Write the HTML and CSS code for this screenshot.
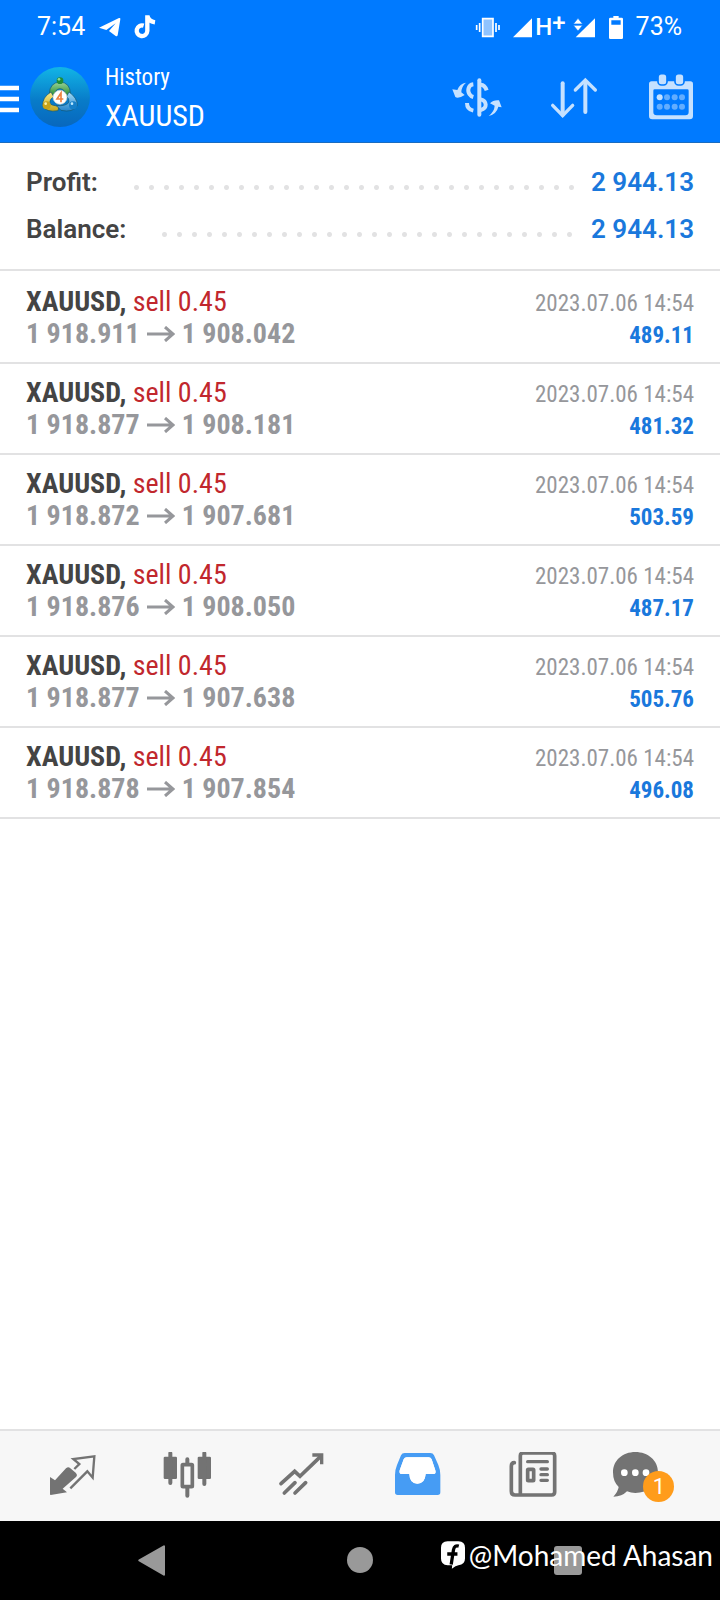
FILE: index.html
```html
<!DOCTYPE html>
<html lang="en">
<head>
<meta charset="utf-8">
<meta name="viewport" content="width=device-width, initial-scale=1">
<title>History XAUUSD</title>
<link rel="stylesheet" href="styles.css">
</head>
<body>
<div class="screen">
  <header class="header">
    <div class="status">
      <span class="clock">7:54</span>
      <svg class="telegram" viewBox="294 45 69 72"><path fill="#fff" d="M297 83 357 54Q362 53 361 58L353 106Q351 111 346 107L327 93 347 70 319 90Z"/></svg>
      <svg class="tiktok" viewBox="399 45 69 72"><path fill="none" stroke="#fff" stroke-width="13" d="M431 77A16 16 0 1 0 442 93V46M442 47Q445 64 465 67"/></svg>
      <span class="spring"></span>
      <svg class="vibrate" viewBox="141 45 78 69"><path fill="#8fc3ff" stroke="#fff" stroke-width="5" d="M164 53H195V106H164Z"/><path fill="none" stroke="#fff" stroke-width="5" d="M155 66V93M146 72V87M204 66V93M213 72V87"/></svg>
      <svg class="signal" viewBox="255 45 57 69"><path fill="#fff" d="M255 109 312 52V109Z"/></svg>
      <span class="network">H<span class="plus">+</span></span>
      <svg class="signal-two" viewBox="429 45 69 69"><path fill="#fff" d="M437 109 495 52V109Z"/><path fill="#fff" stroke="#007aff" stroke-width="2" d="M430 69 444 52 458 69ZM430 73H458L444 90Z"/></svg>
      <svg class="battery" viewBox="533 42 48 75"><path fill="#fff" fill-rule="evenodd" d="M549 45H565V50H574Q578 50 578 54V110Q578 114 574 114H540Q536 114 536 110V54Q536 50 540 50H549ZM543 58V71H571V58Z"/></svg>
      <span class="charge">73%</span>
    </div>
    <div class="appbar">
      <button class="menu" aria-label="Menu"><svg viewBox="0 256 57 84"><path stroke="#fff" stroke-width="14" d="M0 265H57M0 298H57M0 331H57"/></svg></button>
      <svg class="logo" viewBox="90 203 180 180">
        <defs>
          <linearGradient id="sky" x1="0" y1="0" x2="0" y2="1"><stop offset="0" stop-color="#12b5e6"/><stop offset=".55" stop-color="#087cc9"/><stop offset="1" stop-color="#0867bd"/></linearGradient>
          <linearGradient id="green" x1="0" y1="0" x2="0" y2="1"><stop offset="0" stop-color="#9bd49b"/><stop offset="1" stop-color="#248a2c"/></linearGradient>
          <linearGradient id="gold" x1="0" y1="0" x2="0" y2="1"><stop offset="0" stop-color="#f5e98a"/><stop offset="1" stop-color="#c6a61c"/></linearGradient>
          <linearGradient id="azure" x1="0" y1="0" x2="0" y2="1"><stop offset="0" stop-color="#a4dcf7"/><stop offset="1" stop-color="#2584cb"/></linearGradient>
        </defs>
        <circle cx="180" cy="293" r="90" fill="url(#sky)"/>
        <g stroke="#12556f" stroke-width="2">
          <path fill="url(#green)" d="M148 283Q149 250 180 248 211 250 211 283L198 290Q195 269 180 268 165 269 162 290Z"/>
          <path fill="url(#gold)" d="M153 278Q126 294 128 320 139 340 174 334L177 320Q152 319 149 311 149 299 161 292Z"/>
          <path fill="url(#azure)" d="M207 278Q232 295 232 319 218 341 183 333L169 319Q198 321 207 309 208 298 200 291Z"/>
        </g>
        <circle cx="180" cy="244" r="10" fill="#1f8d38"/>
        <circle cx="140" cy="318" r="12" fill="#c7a31a"/>
        <circle cx="219" cy="318" r="12" fill="#167fc9"/>
        <circle cx="137" cy="313" r="4" fill="#fff2a6"/><circle cx="216" cy="313" r="4" fill="#bde9ff"/><circle cx="177" cy="240" r="4" fill="#8edc92"/>
        <circle cx="180" cy="294" r="21" fill="#fff" stroke="#c9cfc5" stroke-width="2"/>
        <path fill="none" stroke="#ef8240" stroke-width="5" d="M183 309V281L171 299H190"/>
      </svg>
      <div class="titles"><span class="page">History</span><h1 class="symbol">XAUUSD</h1></div>
      <div class="actions">
        <button class="action" aria-label="Symbol filter"><svg viewBox="60 218 162 144"><g fill="none" stroke="#c5e1ff" stroke-linecap="round"><path stroke-width="12" d="M148 240V343"/><path stroke-width="12" stroke-linecap="butt" d="M130 252C113 254 112 274 119 282Q123 288 130 290M152 253Q165 254 170 270M111 308Q111 327 130 331M152 297C171 302 173 324 152 329"/></g><path fill="#c5e1ff" d="M108 247Q89 249 82 269L67 267 76 290Q84 297 104 284L94 276Q94 259 108 247ZM176 347Q193 333 194 316L180 309Q190 298 207 300L215 321 205 319Q200 341 176 347Z"/></svg></button>
        <button class="action" aria-label="Sort"><svg viewBox="351 218 162 144"><path fill="none" stroke="#c5e1ff" stroke-width="12" stroke-linecap="round" d="M398 249V343"/><path fill="none" stroke="#c5e1ff" stroke-width="10" stroke-linecap="round" d="M368 315 398 346 428 315M436 269 466 239 496 269"/><path stroke="#c5e1ff" stroke-width="12" stroke-linecap="round" d="M466 244V335"/></svg></button>
        <button class="action" aria-label="Date range"><svg viewBox="642 218 162 144"><path fill="#c5e1ff" fill-rule="evenodd" d="M665 243H781Q789 243 789 251V347Q789 357 779 357H667Q657 357 657 347V251Q657 243 665 243ZM674 267Q670 267 670 271V335Q670 345 680 345H766Q776 345 776 335V271Q776 267 772 267Z"/><g fill="#c5e1ff" stroke="#007aff" stroke-width="5"><rect x="684" y="220" width="27" height="34" rx="10"/><rect x="735" y="220" width="27" height="34" rx="10"/></g><circle cx="689" cy="291" r="9" fill="#c5e1ff"/><g fill="#62adff"><circle cx="711" cy="291" r="9"/><circle cx="734" cy="291" r="9"/><circle cx="756" cy="291" r="9"/><circle cx="689" cy="319" r="9"/><circle cx="711" cy="319" r="9"/><circle cx="734" cy="319" r="9"/><circle cx="756" cy="319" r="9"/></g></svg></button>
      </div>
    </div>
  </header>

  <main class="content">
    <section class="summary">
      <div class="total"><span>Profit:</span><i class="dots"></i><span class="amount">2 944.13</span></div>
      <div class="total"><span>Balance:</span><i class="dots"></i><span class="amount">2 944.13</span></div>
    </section>
    <ul class="deals">
      <li class="deal"><div><p class="name"><b>XAUUSD,</b> <span class="sell">sell 0.45</span></p><p class="prices">1 918.911 <svg class="arrow" viewBox="0 0 28 16"><path d="M0 8H26M18 1 26 8 18 15"/></svg> 1 908.042</p></div><div class="result"><time>2023.07.06 14:54</time><b class="gain">489.11</b></div></li>
      <li class="deal"><div><p class="name"><b>XAUUSD,</b> <span class="sell">sell 0.45</span></p><p class="prices">1 918.877 <svg class="arrow" viewBox="0 0 28 16"><path d="M0 8H26M18 1 26 8 18 15"/></svg> 1 908.181</p></div><div class="result"><time>2023.07.06 14:54</time><b class="gain">481.32</b></div></li>
      <li class="deal"><div><p class="name"><b>XAUUSD,</b> <span class="sell">sell 0.45</span></p><p class="prices">1 918.872 <svg class="arrow" viewBox="0 0 28 16"><path d="M0 8H26M18 1 26 8 18 15"/></svg> 1 907.681</p></div><div class="result"><time>2023.07.06 14:54</time><b class="gain">503.59</b></div></li>
      <li class="deal"><div><p class="name"><b>XAUUSD,</b> <span class="sell">sell 0.45</span></p><p class="prices">1 918.876 <svg class="arrow" viewBox="0 0 28 16"><path d="M0 8H26M18 1 26 8 18 15"/></svg> 1 908.050</p></div><div class="result"><time>2023.07.06 14:54</time><b class="gain">487.17</b></div></li>
      <li class="deal"><div><p class="name"><b>XAUUSD,</b> <span class="sell">sell 0.45</span></p><p class="prices">1 918.877 <svg class="arrow" viewBox="0 0 28 16"><path d="M0 8H26M18 1 26 8 18 15"/></svg> 1 907.638</p></div><div class="result"><time>2023.07.06 14:54</time><b class="gain">505.76</b></div></li>
      <li class="deal"><div><p class="name"><b>XAUUSD,</b> <span class="sell">sell 0.45</span></p><p class="prices">1 918.878 <svg class="arrow" viewBox="0 0 28 16"><path d="M0 8H26M18 1 26 8 18 15"/></svg> 1 907.854</p></div><div class="result"><time>2023.07.06 14:54</time><b class="gain">496.08</b></div></li>
    </ul>
  </main>

  <nav class="tabs">
    <button class="tab" aria-label="Quotes"><svg viewBox="54 96 144 144"><path fill="#737373" d="M60 171 75 181 108 145Q115 138 121 145L137 158Q144 165 138 171L98 206 111 217 62 225Q60 225 60 222Z"/><path fill="none" stroke="#737373" stroke-width="7" d="M133 147 148 132 130 117 193 109 188 173 172 154 121 205"/></svg></button>
    <button class="tab" aria-label="Charts"><svg viewBox="400 96 144 144"><g fill="#737373"><rect x="402" y="110" width="40" height="67" rx="4"/><rect x="504" y="110" width="40" height="67" rx="4"/></g><rect x="458" y="134" width="30" height="66" rx="2" fill="none" stroke="#737373" stroke-width="11"/><path fill="none" stroke="#737373" stroke-width="12" stroke-linecap="round" d="M422 100V189M524 100V192M473 118V130M473 204V227"/></svg></button>
    <button class="tab" aria-label="Trade"><svg viewBox="86 96 144 144"><g fill="none" stroke="#737373" stroke-width="11" stroke-linecap="round"><path d="M95 191 136 154 152 169 214 109M105 219 137 188M137 219 169 188"/><path stroke-linecap="butt" stroke-width="10" d="M189 105H217V133"/></g></svg></button>
    <button class="tab" aria-label="History" aria-current="page"><svg viewBox="432 96 144 144"><path fill="#469cf4" fill-rule="evenodd" d="M464 99H541Q549 99 552 106L565 135Q571 149 571 165V217Q571 225 563 225H443Q435 225 435 217V165Q435 149 441 135L453 106Q456 99 464 99ZM470 112Q464 112 461 118L449 151Q447 162 454 162H478Q479 191 502 191 525 191 527 162H551Q559 162 556 151L545 118Q542 112 536 112Z"/><path fill="#fff" d="M470 112Q464 112 461 118L449 151Q447 162 454 162H478Q479 191 502 191 525 191 527 162H551Q559 162 556 151L545 118Q542 112 536 112Z"/></svg></button>
    <button class="tab" aria-label="News"><svg viewBox="88 96 144 144"><g fill="none" stroke="#737373" stroke-width="11" stroke-linecap="round"><path d="M104 128Q95 128 95 139V214Q95 225 106 225H216Q225 225 225 216V107Q225 99 216 99H131Q122 99 122 107V222"/><path stroke-width="10" d="M144 125H203M184 147H203M184 164H203M184 181H203"/><rect x="144" y="148" width="18" height="34" rx="2"/></g></svg></button>
    <button class="tab" aria-label="Messages, 1 unread"><span class="bubble"><svg viewBox="398 96 216 144"><path fill="#737373" d="M468 96C506 96 536 121 536 157S506 219 468 219Q455 219 443 214 428 230 402 230 416 215 418 201 401 185 401 157C401 121 430 96 468 96Z"/><g fill="#fff"><circle cx="435" cy="158" r="10"/><circle cx="468" cy="158" r="10"/><circle cx="500" cy="158" r="10"/></g></svg><span class="badge">1</span></span></button>
  </nav>

  <footer class="system">
    <button class="key" aria-label="Back"><svg viewBox="114 90 84 93"><path fill="#999" stroke="#999" stroke-width="6" stroke-linejoin="round" d="M118 136 192 94V179Z"/></svg></button>
    <button class="key" aria-label="Home"><svg viewBox="0 0 28 31"><circle cx="14" cy="15" r="13" fill="#999"/></svg></button>
    <button class="key" aria-label="Recents"><svg viewBox="0 0 28 31"><rect y="1" width="28" height="29" rx="3" fill="#999"/></svg></button>
    <div class="credit"><svg viewBox="57 87 73 84"><path fill="#fff" d="M77 87H110Q130 87 130 107V140Q130 159 110 160 102 161 90 171L91 160H77Q57 160 57 140V107Q57 87 77 87Z"/><path fill="none" stroke="#000" stroke-width="10" d="M111 102Q98 98 95 113L88 158M76 126H107"/></svg><span>@Mohamed Ahasan</span></div>
  </footer>
</div>
</body>
</html>
```

FILE: styles.css
```css
* { box-sizing: border-box; }
body { margin: 0; background: #fff; color: #444; font-family: Roboto, "Liberation Sans", sans-serif; }
button { display: flex; align-items: center; justify-content: center; margin: 0; padding: 0; border: 0; background: none; font: inherit; }
svg { display: block; flex: none; }
p, h1, ul { margin: 0; padding: 0; font-weight: 400; }
.screen { display: flex; flex-direction: column; min-height: 100vh; }

.header { background: #007aff; color: #fff; border-bottom: 1px solid #1a6cc0; }
.status { display: flex; align-items: center; height: 54px; padding: 0 38px 0 37px; font-size: 25px; line-height: 28px; }
.spring { flex: 1; }
.telegram { width: 23px; height: 24px; margin-left: 13px; }
.tiktok { width: 23px; height: 24px; margin-left: 12px; }
.vibrate { width: 26px; height: 23px; margin-right: 12px; }
.signal { width: 19px; height: 23px; margin-right: 3px; }
.network { display: flex; font-size: 24px; font-weight: 500; margin-right: 7px; }
.plus { line-height: 20px; }
.signal-two { width: 23px; height: 23px; margin-right: 12px; }
.battery { width: 16px; height: 25px; margin-right: 12px; }

.appbar { display: flex; align-items: center; height: 88px; padding: 0 22px 2px 0; }
.menu svg { width: 19px; height: 28px; }
.menu { padding-top: 4px; }
.logo { width: 60px; height: 60px; margin: 0 15px 0 11px; }
.titles { display: flex; flex-direction: column; flex: 1; font-family: "Roboto Condensed", "Liberation Sans Narrow", Roboto, sans-serif; }
.page { font-size: 23px; line-height: 38px; }
.symbol { font-size: 30px; line-height: 38px; }
.actions { display: flex; gap: 43px; }
.action svg { width: 54px; height: 48px; }

.content { flex: 1; }
.summary { padding: 15px 26px 17px; border-bottom: 2px solid #e2e2e3; font-size: 26px; font-weight: 600; }
.total { display: flex; align-items: center; height: 47px; }
.dots { flex: 1; height: 5px; margin: 12px 10px 0 31px; background: radial-gradient(circle at center, #e2e2e3 2px, transparent 3px) 0 0 / 15px 5px repeat-x; }
.amount, .gain { color: #1a78dc; }
.deals { padding-top: 2px; list-style: none; font-family: "Roboto Condensed", "Liberation Sans Narrow", Roboto, sans-serif; }
.deal { display: flex; justify-content: space-between; height: 91px; padding: 13px 26px 0; border-bottom: 2px solid #e2e2e3; font-size: 28px; line-height: 32px; }
.sell { color: #c1272d; }
.prices { display: flex; align-items: center; gap: 7px; color: #96979b; font-weight: 700; }
.arrow { width: 28px; height: 16px; fill: none; stroke: #96979b; stroke-width: 3; }
.result { display: flex; flex-direction: column; align-items: flex-end; padding-top: 2px; font-size: 23px; color: #96979b; }

.tabs { display: grid; grid-template-columns: repeat(6, 1fr); height: 92px; padding: 0 14px; border-top: 2px solid #e2e2e3; background: #f7f7f7; }
.tab svg { width: 48px; height: 48px; }
.bubble { position: relative; }
.tab .bubble svg { width: 72px; height: 48px; }
.badge { position: absolute; left: 31px; top: 19px; width: 31px; height: 31px; border-radius: 50%; background: #ff9c1b; color: #fff; font-size: 22px; line-height: 31px; text-align: center; }

.system { position: relative; display: grid; grid-template-columns: repeat(3, 1fr); height: 79px; padding: 0 48px; background: #000; }
.key svg { width: 28px; height: 31px; }
.credit { position: absolute; right: 7px; top: 17px; display: flex; align-items: center; gap: 4px; color: #fff; font-family: Lato, sans-serif; font-size: 28px; line-height: 34px; }
.credit svg { width: 24px; height: 28px; }
```
